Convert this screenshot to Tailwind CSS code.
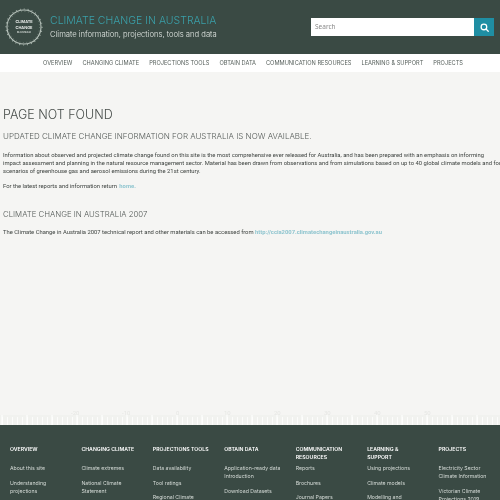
<!doctype html>
<html>
<head>
  <meta charset="UTF-8">
  <meta name="viewport" content="width=device-width, initial-scale=1.0">
  <script src="https://cdn.jsdelivr.net/npm/@tailwindcss/browser@4"></script>
</head>
<body class="h-[500px] overflow-hidden bg-[#f5f5f3] blur-[0.3px] font-['Roboto',sans-serif]">
  <!-- Header -->
  <header class="h-[54px] bg-[#3a4a44] flex items-center pl-[5px] pr-[6px]">
    <svg class="w-[38px] h-[38px] shrink-0" viewBox="0 0 38 38">
      <circle cx="19" cy="19" r="17" fill="none" stroke="#b9c4bd" stroke-width="1.1"/>
      <circle cx="19" cy="19" r="18" fill="none" stroke="#9fada5" stroke-width="1.2" stroke-dasharray="1 3"/>
      <circle cx="19" cy="19" r="15.6" fill="none" stroke="#8d9c94" stroke-width="0.6" stroke-dasharray="1 2.5"/>
      <text x="19" y="14.5" text-anchor="middle" font-family="Inter" font-weight="600" font-size="3.9" fill="#f2f4f2">CLIMATE</text>
      <text x="19" y="20.5" text-anchor="middle" font-family="Inter" font-weight="600" font-size="3.9" fill="#f2f4f2">CHANGE</text>
      <text x="19" y="25" text-anchor="middle" font-family="Inter" font-weight="600" font-size="2" fill="#dfe5e1">IN AUSTRALIA</text>
    </svg>
    <div class="ml-[7px] font-['Inter',sans-serif]">
      <div class="text-[10.5px] leading-[14px] font-light text-[#3aa0aa] whitespace-nowrap">CLIMATE CHANGE IN AUSTRALIA</div>
      <div class="text-[7.65px] leading-[11px] mt-[1px] font-light text-[#e3e8e4] whitespace-nowrap">Climate information, projections, tools and data</div>
    </div>
    <form class="ml-auto flex h-[18px]">
      <input type="text" placeholder="Search" class="w-[163px] bg-white px-[4px] text-[6.5px] placeholder:text-[#8a8a8a] font-['Noto_Sans',sans-serif]">
      <button type="button" class="w-[20px] bg-[#1f8ea3] flex items-center justify-center">
        <svg class="w-[9px] h-[9px]" viewBox="0 0 24 24" fill="none" stroke="#fff" stroke-width="3.4" stroke-linecap="round">
          <circle cx="10.5" cy="10.5" r="7.5"/><path d="M16 16l6 6"/>
        </svg>
      </button>
    </form>
  </header>

  <!-- Nav -->
  <nav class="h-[18px] bg-white flex items-center justify-center gap-[10px] pl-[6px] text-[5.67px] text-[#555e5a] font-['Inter',sans-serif] whitespace-nowrap">
    <a>OVERVIEW</a><a>CHANGING CLIMATE</a><a>PROJECTIONS TOOLS</a><a>OBTAIN DATA</a><a>COMMUNICATION RESOURCES</a><a>LEARNING &amp; SUPPORT</a><a>PROJECTS</a>
  </nav>

  <!-- Content -->
  <main class="h-[353px] pl-[3px] pt-[35px] text-[#3f4441] whitespace-nowrap">
    <h1 class="text-[12.5px] leading-[16px] font-light text-[#474d4a] font-['Inter',sans-serif]">PAGE NOT FOUND</h1>
    <h2 class="mt-[7px] text-[8px] leading-[12px] font-light text-[#555b58] font-['Inter',sans-serif]">UPDATED CLIMATE CHANGE INFORMATION FOR AUSTRALIA IS NOW AVAILABLE.</h2>
    <p class="mt-[10px] text-[5.85px] leading-[7.8px]">
      Information about observed and projected climate change found on this site is the most comprehensive ever released for Australia, and has been prepared with an emphasis on informing<br>
      impact assessment and planning in the natural resource management sector. Material has been drawn from observations and from simulations based on up to 40 global climate models and four<br>
      scenarios of greenhouse gas and aerosol emissions during the 21st century.
    </p>
    <p class="mt-[8px] text-[5.85px] leading-[7.6px]">For the latest reports and information return <a class="ml-[1px] font-bold text-[#8fc5cf]">home.</a></p>
    <h3 class="mt-[17px] text-[7.8px] leading-[12px] font-light text-[#555b58] font-['Inter',sans-serif]">CLIMATE CHANGE IN AUSTRALIA 2007</h3>
    <p class="mt-[9px] text-[5.85px] leading-[7.6px]">The Climate Change in Australia 2007 technical report and other materials can be accessed from <a class="font-bold text-[#8fc5cf]">http://ccia2007.climatechangeinaustralia.gov.au</a></p>
  </main>

  <!-- Temperature ruler above footer -->
  <div class="relative h-[10px] -mt-[10px]">
    <svg class="absolute left-0 bottom-0 w-[500px] h-[10px]" viewBox="0 0 500 10">
      <defs>
        <pattern id="ticks" x="2" y="0" width="5" height="10" patternUnits="userSpaceOnUse">
          <rect x="0" y="2" width="1" height="8" fill="#fcfcfb"/>
        </pattern>
        <pattern id="majors" x="26.5" y="0" width="25" height="10" patternUnits="userSpaceOnUse">
          <rect x="0" y="0" width="1" height="10" fill="#ffffff"/>
        </pattern>
      </defs>
      <rect width="500" height="10" fill="#f1f2ef"/>
      <rect width="500" height="10" fill="url(#ticks)"/>
      <rect width="500" height="10" fill="url(#majors)"/>
    </svg>
    <div class="absolute left-0 -top-[6px] w-full text-[6px] leading-[7px] text-[#e6e7e4]">
      <span class="absolute left-[71px]">-20</span>
      <span class="absolute left-[122px]">-10</span>
      <span class="absolute left-[176px]">0</span>
      <span class="absolute left-[224px]">10</span>
      <span class="absolute left-[274px]">20</span>
      <span class="absolute left-[324px]">30</span>
      <span class="absolute left-[374px]">40</span>
      <span class="absolute left-[424px]">50</span>
    </div>
  </div>

  <!-- Footer -->
  <footer class="h-[75px] overflow-hidden bg-[#3a4a44] pt-[20px] grid grid-cols-7 text-[5.2px] leading-[8px] text-[#d5dbd7] font-['Inter',sans-serif]">
    <div class="pl-[10px]">
      <h4 class="h-[19px] font-semibold text-white">OVERVIEW</h4>
      <ul class="flex flex-col gap-[6.5px]"><li>About this site</li><li>Understanding<br>projections</li></ul>
    </div>
    <div class="pl-[10px]">
      <h4 class="h-[19px] font-semibold text-white">CHANGING CLIMATE</h4>
      <ul class="flex flex-col gap-[6.5px]"><li>Climate extremes</li><li>National Climate<br>Statement</li></ul>
    </div>
    <div class="pl-[10px]">
      <h4 class="h-[19px] font-semibold text-white">PROJECTIONS TOOLS</h4>
      <ul class="flex flex-col gap-[6.5px]"><li>Data availability</li><li>Tool ratings</li><li>Regional Climate</li></ul>
    </div>
    <div class="pl-[10px]">
      <h4 class="h-[19px] font-semibold text-white">OBTAIN DATA</h4>
      <ul class="flex flex-col gap-[6.5px]"><li>Application-ready data<br>Introduction</li><li>Download Datasets</li></ul>
    </div>
    <div class="pl-[10px]">
      <h4 class="h-[19px] font-semibold text-white">COMMUNICATION<br>RESOURCES</h4>
      <ul class="flex flex-col gap-[6.5px]"><li>Reports</li><li>Brochures</li><li>Journal Papers</li></ul>
    </div>
    <div class="pl-[10px]">
      <h4 class="h-[19px] font-semibold text-white">LEARNING &amp;<br>SUPPORT</h4>
      <ul class="flex flex-col gap-[6.5px]"><li>Using projections</li><li>Climate models</li><li>Modelling and</li></ul>
    </div>
    <div class="pl-[10px]">
      <h4 class="h-[19px] font-semibold text-white">PROJECTS</h4>
      <ul class="flex flex-col gap-[6.5px]"><li>Electricity Sector<br>Climate Information</li><li>Victorian Climate<br>Projections 2019</li></ul>
    </div>
  </footer>
</body>
</html>
